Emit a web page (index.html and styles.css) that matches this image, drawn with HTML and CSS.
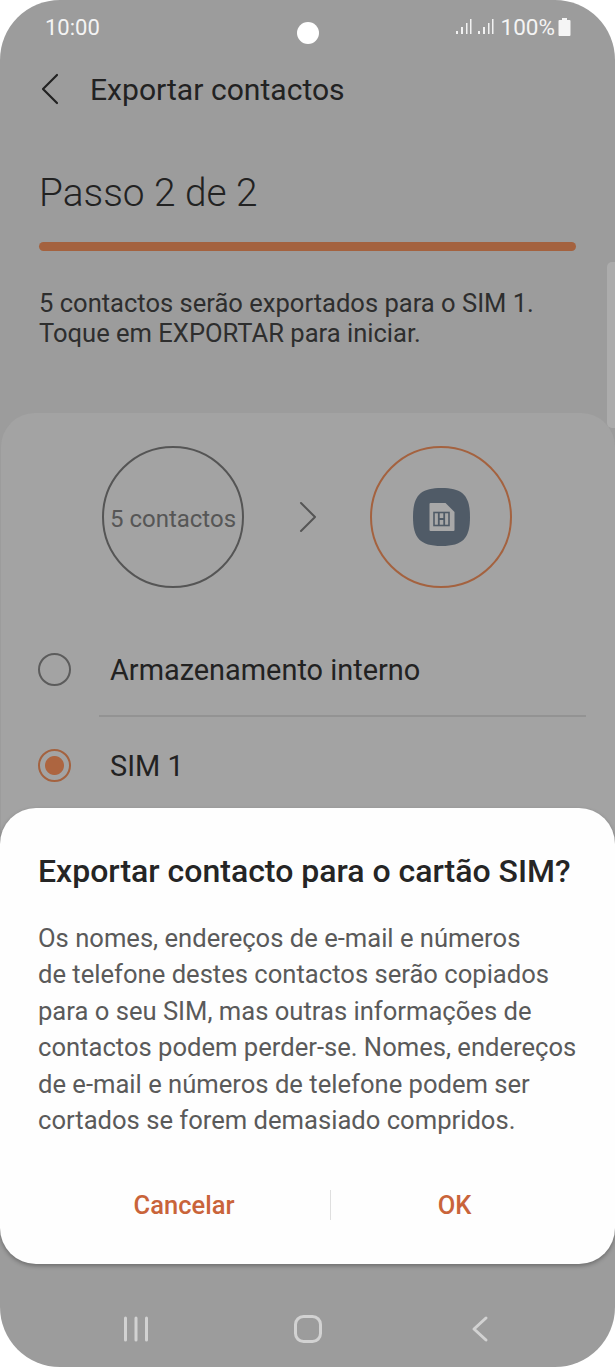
FILE: index.html
```html
<!DOCTYPE html>
<html lang="pt">
<head>
    <meta charset="UTF-8">
    <meta name="viewport" content="width=device-width, initial-scale=1.0">
    <title>Exportar contactos</title>
    <link rel="stylesheet" href="styles.css">
</head>
<body>
    <div class="phone">
        <div class="status_bar">
            <span class="clock">10:00</span>
            <div class="status_right">
                <svg class="signal" width="38" height="18" viewBox="0 0 38 18">
                    <g fill="#f1f1f1">
                        <rect x="0" y="13" width="2" height="3"/>
                        <rect x="5" y="9" width="2" height="7"/>
                        <rect x="10" y="5" width="1.5" height="11"/>
                        <rect x="14" y="1" width="1.5" height="15"/>
                        <rect x="22" y="13" width="2" height="3"/>
                        <rect x="27" y="9" width="2" height="7"/>
                        <rect x="32" y="5" width="1.5" height="11"/>
                        <rect x="36" y="1" width="1.5" height="15"/>
                    </g>
                </svg>
                <span class="percent">100%</span>
                <svg class="battery" width="13" height="18" viewBox="0 0 13 18">
                    <path d="M4 0h5v2h2.500q1 0 1 1v14q0 1-1 1h-10q-1 0-1-1V3q0-1 1-1H4z" fill="#f5f5f5"/>
                </svg>
            </div>
        </div>
        <div class="camera"></div>

        <div class="app_bar">
            <svg class="back" width="20" height="32" viewBox="0 0 20 32">
                <path d="M17 2 3 16l14 14" fill="none" stroke="#222" stroke-width="2.200" stroke-linecap="round" stroke-linejoin="round"/>
            </svg>
            <h1>Exportar contactos</h1>
        </div>

        <div class="intro">
            <h2>Passo 2 de 2</h2>
            <div class="progress"></div>
            <p>5 contactos serão exportados para o SIM 1.<br>Toque em EXPORTAR para iniciar.</p>
        </div>

        <div class="panel">
            <div class="flow">
                <div class="circle"><span class="circle_text">5 contactos</span></div>
                <svg class="arrow" width="21" height="32" viewBox="0 0 21 32">
                    <path d="M4 2 18 16 4 30" fill="none" stroke="#555" stroke-width="2" stroke-linecap="round" stroke-linejoin="round"/>
                </svg>
                <div class="circle circle_sim">
                    <svg width="57" height="58" viewBox="0 0 57 58">
                        <path d="M28.500 0C50 0 57 8 57 29S50 58 28.500 58 0 50 0 29 7 0 28.500 0Z" fill="#505b67"/>
                        <path d="M16.500 16q0-1 1-1h15l9 9v18q0 1-1 1h-23q-1 0-1-1Z" fill="#a8a8a8"/>
                        <rect x="21" y="24.500" width="15" height="13" fill="none" stroke="#505b67" stroke-width="1.600"/>
                        <path d="M25.800 24.500v13M31.200 24.500v13M25.800 31h5.400" fill="none" stroke="#505b67" stroke-width="1.800"/>
                    </svg>
                </div>
            </div>
            <div class="option">
                <span class="radio"></span>
                <span class="option_label">Armazenamento interno</span>
            </div>
            <div class="divider"></div>
            <div class="option">
                <span class="radio radio_on"></span>
                <span class="option_label">SIM 1</span>
            </div>
        </div>

        <div class="scroll_thumb"></div>

        <div class="dialog">
            <h3>Exportar contacto para o cartão SIM?</h3>
            <p>Os nomes, endereços de e-mail e números<br>de telefone destes contactos serão copiados<br>para o seu SIM, mas outras informações de<br>contactos podem perder-se. Nomes, endereços<br>de e-mail e números de telefone podem ser<br>cortados se forem demasiado compridos.</p>
            <div class="dialog_btns">
                <span class="btn btn_cancel">Cancelar</span>
                <span class="btn_sep"></span>
                <span class="btn">OK</span>
            </div>
        </div>

        <div class="nav_bar">
            <svg width="26" height="28" viewBox="0 0 26 28">
                <path d="M2.500 3v22M13 3v22M23.500 3v22" fill="none" stroke="#d2d2d2" stroke-width="3" stroke-linecap="round"/>
            </svg>
            <svg width="28" height="28" viewBox="0 0 28 28">
                <rect x="1.500" y="1.500" width="25" height="25" rx="8" fill="none" stroke="#d2d2d2" stroke-width="3"/>
            </svg>
            <svg width="23" height="28" viewBox="0 0 23 28">
                <path d="M19 3 7 14l12 11" fill="none" stroke="#d2d2d2" stroke-width="3" stroke-linecap="round" stroke-linejoin="round"/>
            </svg>
        </div>
    </div>
</body>
</html>
```

FILE: styles.css
```css
*{
    margin: 0px;
    padding: 0px;
    box-sizing: border-box;
}
body{
    width: 615px;
    height: 1367px;
    background-color: #fff;
    font-family: Roboto, "Liberation Sans", sans-serif;
    overflow: hidden;
}
.phone{
    position: relative;
    width: 615px;
    height: 1367px;
    background-color: #9c9c9c;
    border-radius: 60px;
    overflow: hidden;
}
.status_bar{
    display: flex;
    justify-content: space-between;
    align-items: center;
    height: 54px;
    padding: 0px 44px 0px 45px;
    color: #f4f4f4;
    font-size: 22px;
}
.status_right{
    display: flex;
    align-items: center;
    gap: 5px;
}
.signal{
    margin-right: 2px;
}
.percent{
    font-size: 22.500px;
    margin-right: -2px;
}
.camera{
    position: absolute;
    top: 22px;
    left: 297px;
    width: 22px;
    height: 22px;
    border-radius: 50%;
    background-color: #fff;
}
.app_bar{
    display: flex;
    align-items: center;
    height: 70px;
    padding-left: 40px;
    gap: 30px;
}
.app_bar h1{
    font-size: 30.100px;
    font-weight: 400;
    color: #222;
}
.intro{
    padding: 45px 39px 0px 39px;
}
.intro h2{
    font-size: 38.800px;
    font-weight: 300;
    color: #222;
    line-height: 48px;
}
.progress{
    height: 9px;
    margin-top: 25px;
    border-radius: 5px;
    background-color: #a4623f;
}
.intro p{
    margin-top: 37px;
    font-size: 25.550px;
    line-height: 30px;
    color: #2e2e2e;
    white-space: nowrap;
}
.panel{
    margin-top: 65px;
    margin-left: 1px;
    height: 480px;
    padding: 33px 2px 0px 0px;
    background-color: #a3a3a3;
    border-radius: 34px 34px 0px 0px;
}
.flow{
    display: flex;
    justify-content: center;
    align-items: center;
    gap: 52.500px;
}
.circle{
    display: flex;
    justify-content: center;
    align-items: center;
    width: 142px;
    height: 142px;
    border: 2px solid #555;
    border-radius: 50%;
    font-size: 24px;
    color: #565656;
    white-space: nowrap;
}
.circle_text{
    padding-top: 3px;
}
.circle_sim{
    border-color: #a4623f;
}
.option{
    display: flex;
    align-items: center;
    height: 38px;
    padding-left: 37px;
    gap: 39px;
}
.flow + .option{
    margin-top: 62px;
}
.radio{
    width: 33px;
    height: 33px;
    border: 2px solid #5c5c5c;
    border-radius: 50%;
}
.radio_on{
    border-color: #a4623f;
    background: radial-gradient(circle, #ad6540 0 9px, transparent 10px);
}
.option_label{
    padding-top: 1px;
    font-size: 28.900px;
    color: #222;
}
.divider{
    height: 2px;
    margin: 27px 27px 29px 98px;
    background-color: #939393;
}
.scroll_thumb{
    position: absolute;
    top: 262px;
    right: 0px;
    width: 8px;
    height: 166px;
    border-radius: 5px 0px 0px 5px;
    background-color: #acacac;
}
.dialog{
    position: absolute;
    top: 808px;
    left: 0px;
    width: 615px;
    height: 456px;
    padding: 44px 37px 0px 38px;
    background-color: #fefefe;
    border-radius: 36px;
    box-shadow: 0px 2px 4px rgba(0,0,0,0.3);
}
.dialog h3{
    font-size: 32px;
    font-weight: 500;
    line-height: 38px;
    color: #252525;
    white-space: nowrap;
}
.dialog p{
    margin-top: 30px;
    font-size: 25.600px;
    line-height: 36.400px;
    color: #5a5a5a;
    white-space: nowrap;
}
.dialog_btns{
    display: flex;
    align-items: center;
    margin-top: 52px;
}
.btn{
    flex: 1;
    text-align: center;
    font-size: 25.500px;
    font-weight: 500;
    color: #c9643a;
}
.btn_cancel{
    flex: none;
    width: 292px;
}
.btn_sep{
    width: 1px;
    height: 30px;
    background-color: #dfdfdf;
}
.nav_bar{
    position: absolute;
    left: 0px;
    bottom: 24px;
    width: 615px;
    display: flex;
    justify-content: space-between;
    align-items: center;
    padding: 0px 125px 0px 123px;
}
```
